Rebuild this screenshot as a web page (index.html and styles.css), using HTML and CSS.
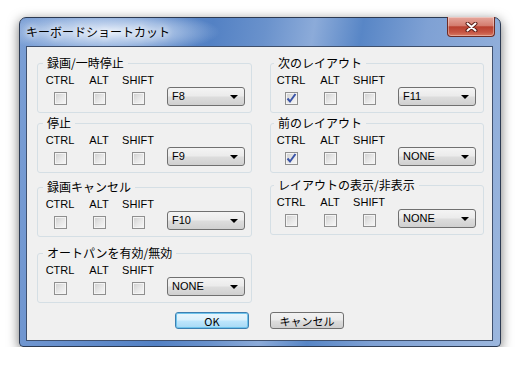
FILE: index.html
```html
<!doctype html>
<html lang="ja">
  <head>
    <meta charset="UTF-8" />
    <title>キーボードショートカット</title>
    <link rel="stylesheet" href="styles.css">
  </head>
  <body>
    <div class="window">
      <div class="titlebar">
        <span class="title">キーボードショートカット</span>
        <button class="close" type="button" aria-label="閉じる">
          <svg width="13" height="10" viewBox="0 0 13 10">
            <path d="M2.5 1.5 L10.5 8.5 M10.5 1.5 L2.5 8.5" stroke="#5a1d16" stroke-width="4" stroke-linecap="round" />
            <path d="M2.5 1.5 L10.5 8.5 M10.5 1.5 L2.5 8.5" stroke="#ffffff" stroke-width="2" stroke-linecap="round" />
          </svg>
        </button>
      </div>

      <div class="client">
        <div class="groups">
          <div class="column left">
            <fieldset class="group">
              <legend>録画/一時停止</legend>
              <div class="keys">
                <div class="key"><span>CTRL</span><i class="check"></i></div>
                <div class="key"><span>ALT</span><i class="check"></i></div>
                <div class="key"><span>SHIFT</span><i class="check"></i></div>
                <div class="select">F8<b class="arrow"></b></div>
              </div>
            </fieldset>

            <fieldset class="group gap-sm">
              <legend>停止</legend>
              <div class="keys">
                <div class="key"><span>CTRL</span><i class="check"></i></div>
                <div class="key"><span>ALT</span><i class="check"></i></div>
                <div class="key"><span>SHIFT</span><i class="check"></i></div>
                <div class="select">F9<b class="arrow"></b></div>
              </div>
            </fieldset>

            <fieldset class="group gap-md">
              <legend>録画キャンセル</legend>
              <div class="keys">
                <div class="key"><span>CTRL</span><i class="check"></i></div>
                <div class="key"><span>ALT</span><i class="check"></i></div>
                <div class="key"><span>SHIFT</span><i class="check"></i></div>
                <div class="select">F10<b class="arrow"></b></div>
              </div>
            </fieldset>

            <fieldset class="group gap-lg">
              <legend>オートパンを有効/無効</legend>
              <div class="keys">
                <div class="key"><span>CTRL</span><i class="check"></i></div>
                <div class="key"><span>ALT</span><i class="check"></i></div>
                <div class="key"><span>SHIFT</span><i class="check"></i></div>
                <div class="select">NONE<b class="arrow"></b></div>
              </div>
            </fieldset>
          </div>

          <div class="column right">
            <fieldset class="group">
              <legend>次のレイアウト</legend>
              <div class="keys">
                <div class="key"><span>CTRL</span><i class="check checked"><svg width="11" height="11" viewBox="0 0 11 11"><path d="M1.5 5.5 L4 8.5 L9.5 1" fill="none" stroke="#3b55a8" stroke-width="2" /></svg></i></div>
                <div class="key"><span>ALT</span><i class="check"></i></div>
                <div class="key"><span>SHIFT</span><i class="check"></i></div>
                <div class="select">F11<b class="arrow"></b></div>
              </div>
            </fieldset>

            <fieldset class="group gap-sm">
              <legend>前のレイアウト</legend>
              <div class="keys">
                <div class="key"><span>CTRL</span><i class="check checked"><svg width="11" height="11" viewBox="0 0 11 11"><path d="M1.5 5.5 L4 8.5 L9.5 1" fill="none" stroke="#3b55a8" stroke-width="2" /></svg></i></div>
                <div class="key"><span>ALT</span><i class="check"></i></div>
                <div class="key"><span>SHIFT</span><i class="check"></i></div>
                <div class="select">NONE<b class="arrow"></b></div>
              </div>
            </fieldset>

            <fieldset class="group gap-r">
              <legend>レイアウトの表示/非表示</legend>
              <div class="keys">
                <div class="key"><span>CTRL</span><i class="check"></i></div>
                <div class="key"><span>ALT</span><i class="check"></i></div>
                <div class="key"><span>SHIFT</span><i class="check"></i></div>
                <div class="select">NONE<b class="arrow"></b></div>
              </div>
            </fieldset>
          </div>
        </div>

        <div class="buttons">
          <button class="btn default" type="button">OK</button>
          <button class="btn" type="button">キャンセル</button>
        </div>
      </div>
    </div>
  </body>
</html>
```

FILE: styles.css
```css
body {
  margin: 0;
  background: #ffffff;
  font-family: "Noto Sans CJK JP", "Liberation Sans", sans-serif;
  font-size: 12px;
  color: #000;
}
.window {
  box-sizing: border-box;
  width: 482px;
  height: 330px;
  margin: 17px 0 0 19px;
  padding: 0 7px 5px 6px;
  border: 1px solid #2c3a52;
  border-radius: 7px 7px 4px 4px;
  background:
    radial-gradient(ellipse 110px 22px at 90px 14px, rgba(235, 242, 252, 0.95) 0%, rgba(210, 225, 245, 0.6) 55%, rgba(210, 225, 245, 0) 100%),
    linear-gradient(100deg, #7b9fd5 0%, #6890cd 18%, #5381c4 36%, #6a92cc 46%, #8cabd9 55%, #5886c6 64%, #7fa1d4 76%, #9cb7de 100%);
  box-shadow: 0 3px 12px rgba(0, 0, 0, 0.55);
}
.titlebar {
  display: flex;
  justify-content: space-between;
  height: 28px;
}
.title {
  line-height: 27px;
  font-size: 12px;
  text-shadow: 0 0 6px #fff, 0 0 10px #fff;
}
.close {
  display: flex;
  align-items: center;
  justify-content: center;
  width: 48px;
  height: 20px;
  margin: -1px -2px 0 0;
  padding: 0;
  border: 1px solid #6e2b24;
  border-top: none;
  border-radius: 0 0 4px 4px;
  background: linear-gradient(#e6a89d 0%, #d47d6f 45%, #b9402f 52%, #c65543 80%, #d87a63 100%);
  box-shadow: inset 0 0 0 1px rgba(255, 255, 255, 0.35);
}
.client {
  box-sizing: border-box;
  height: 295px;
  padding-top: 10px;
  border: 1px solid #3f506d;
  background: #f0f0f0;
}
.groups {
  display: grid;
  grid-template-columns: 215px 214px;
  column-gap: 18px;
  padding-left: 10px;
}
.column {
  display: flex;
  flex-direction: column;
  align-items: stretch;
}
.group {
  box-sizing: border-box;
  height: 56px;
  margin: 0;
  padding: 5px 0 0 0;
  min-width: 0;
  border: 1px solid #d5dfe5;
  border-radius: 3px;
}
.left .group {
  padding-left: 2px;
}
.gap-sm {
  margin-top: 4px;
}
.gap-md {
  margin-top: 8px;
}
.gap-lg {
  margin-top: 10px;
}
.gap-r {
  margin-top: 6px;
}
legend {
  margin-left: 3px;
  padding: 0 4px;
  line-height: 12px;
  font-size: 12px;
}
.keys {
  display: flex;
  align-items: flex-start;
}
.key {
  display: flex;
  flex-direction: column;
  align-items: center;
  gap: 6px;
  width: 40px;
  font-family: "Liberation Sans", sans-serif;
  font-size: 11px;
  line-height: 12px;
}
.key:nth-child(2) {
  width: 38px;
}
.check {
  box-sizing: border-box;
  display: block;
  width: 13px;
  height: 13px;
  border: 1px solid #8f8f8f;
  background: linear-gradient(135deg, #cfcfcf 0%, #e6e6e6 50%, #f8f8f8 100%);
  box-shadow: inset 0 0 0 1px #f4f4f4;
}
.check svg {
  display: block;
}
.select {
  box-sizing: border-box;
  position: relative;
  width: 78px;
  height: 19px;
  margin: 13px 0 0 9px;
  padding-left: 4px;
  border: 1px solid #707070;
  border-radius: 3px;
  background: linear-gradient(#f4f4f4 0%, #ebebeb 48%, #dddddd 52%, #d0d0d0 100%);
  font-family: "Liberation Sans", sans-serif;
  font-size: 11px;
  line-height: 16px;
}
.arrow {
  position: absolute;
  right: 6px;
  top: 7px;
  border-left: 4px solid transparent;
  border-right: 4px solid transparent;
  border-top: 4px solid #000;
}
.buttons {
  display: flex;
  justify-content: center;
  gap: 21px;
  margin-top: 9px;
}
.btn {
  box-sizing: border-box;
  width: 74px;
  height: 17px;
  padding: 0;
  border: 1px solid #707070;
  border-radius: 3px;
  background: linear-gradient(#f2f2f2 0%, #ebebeb 48%, #dddddd 52%, #cfcfcf 100%);
  font-family: "Noto Sans CJK JP", "Liberation Sans", sans-serif;
  font-size: 11px;
  line-height: 14px;
  color: #000;
}
.btn.default {
  border-color: #3c7fb1;
  background: linear-gradient(#eaf6fd 0%, #d9f0fc 48%, #bee6fd 52%, #a7d9f5 100%);
  box-shadow: inset 0 0 0 1px #6fc4ec;
}
```
